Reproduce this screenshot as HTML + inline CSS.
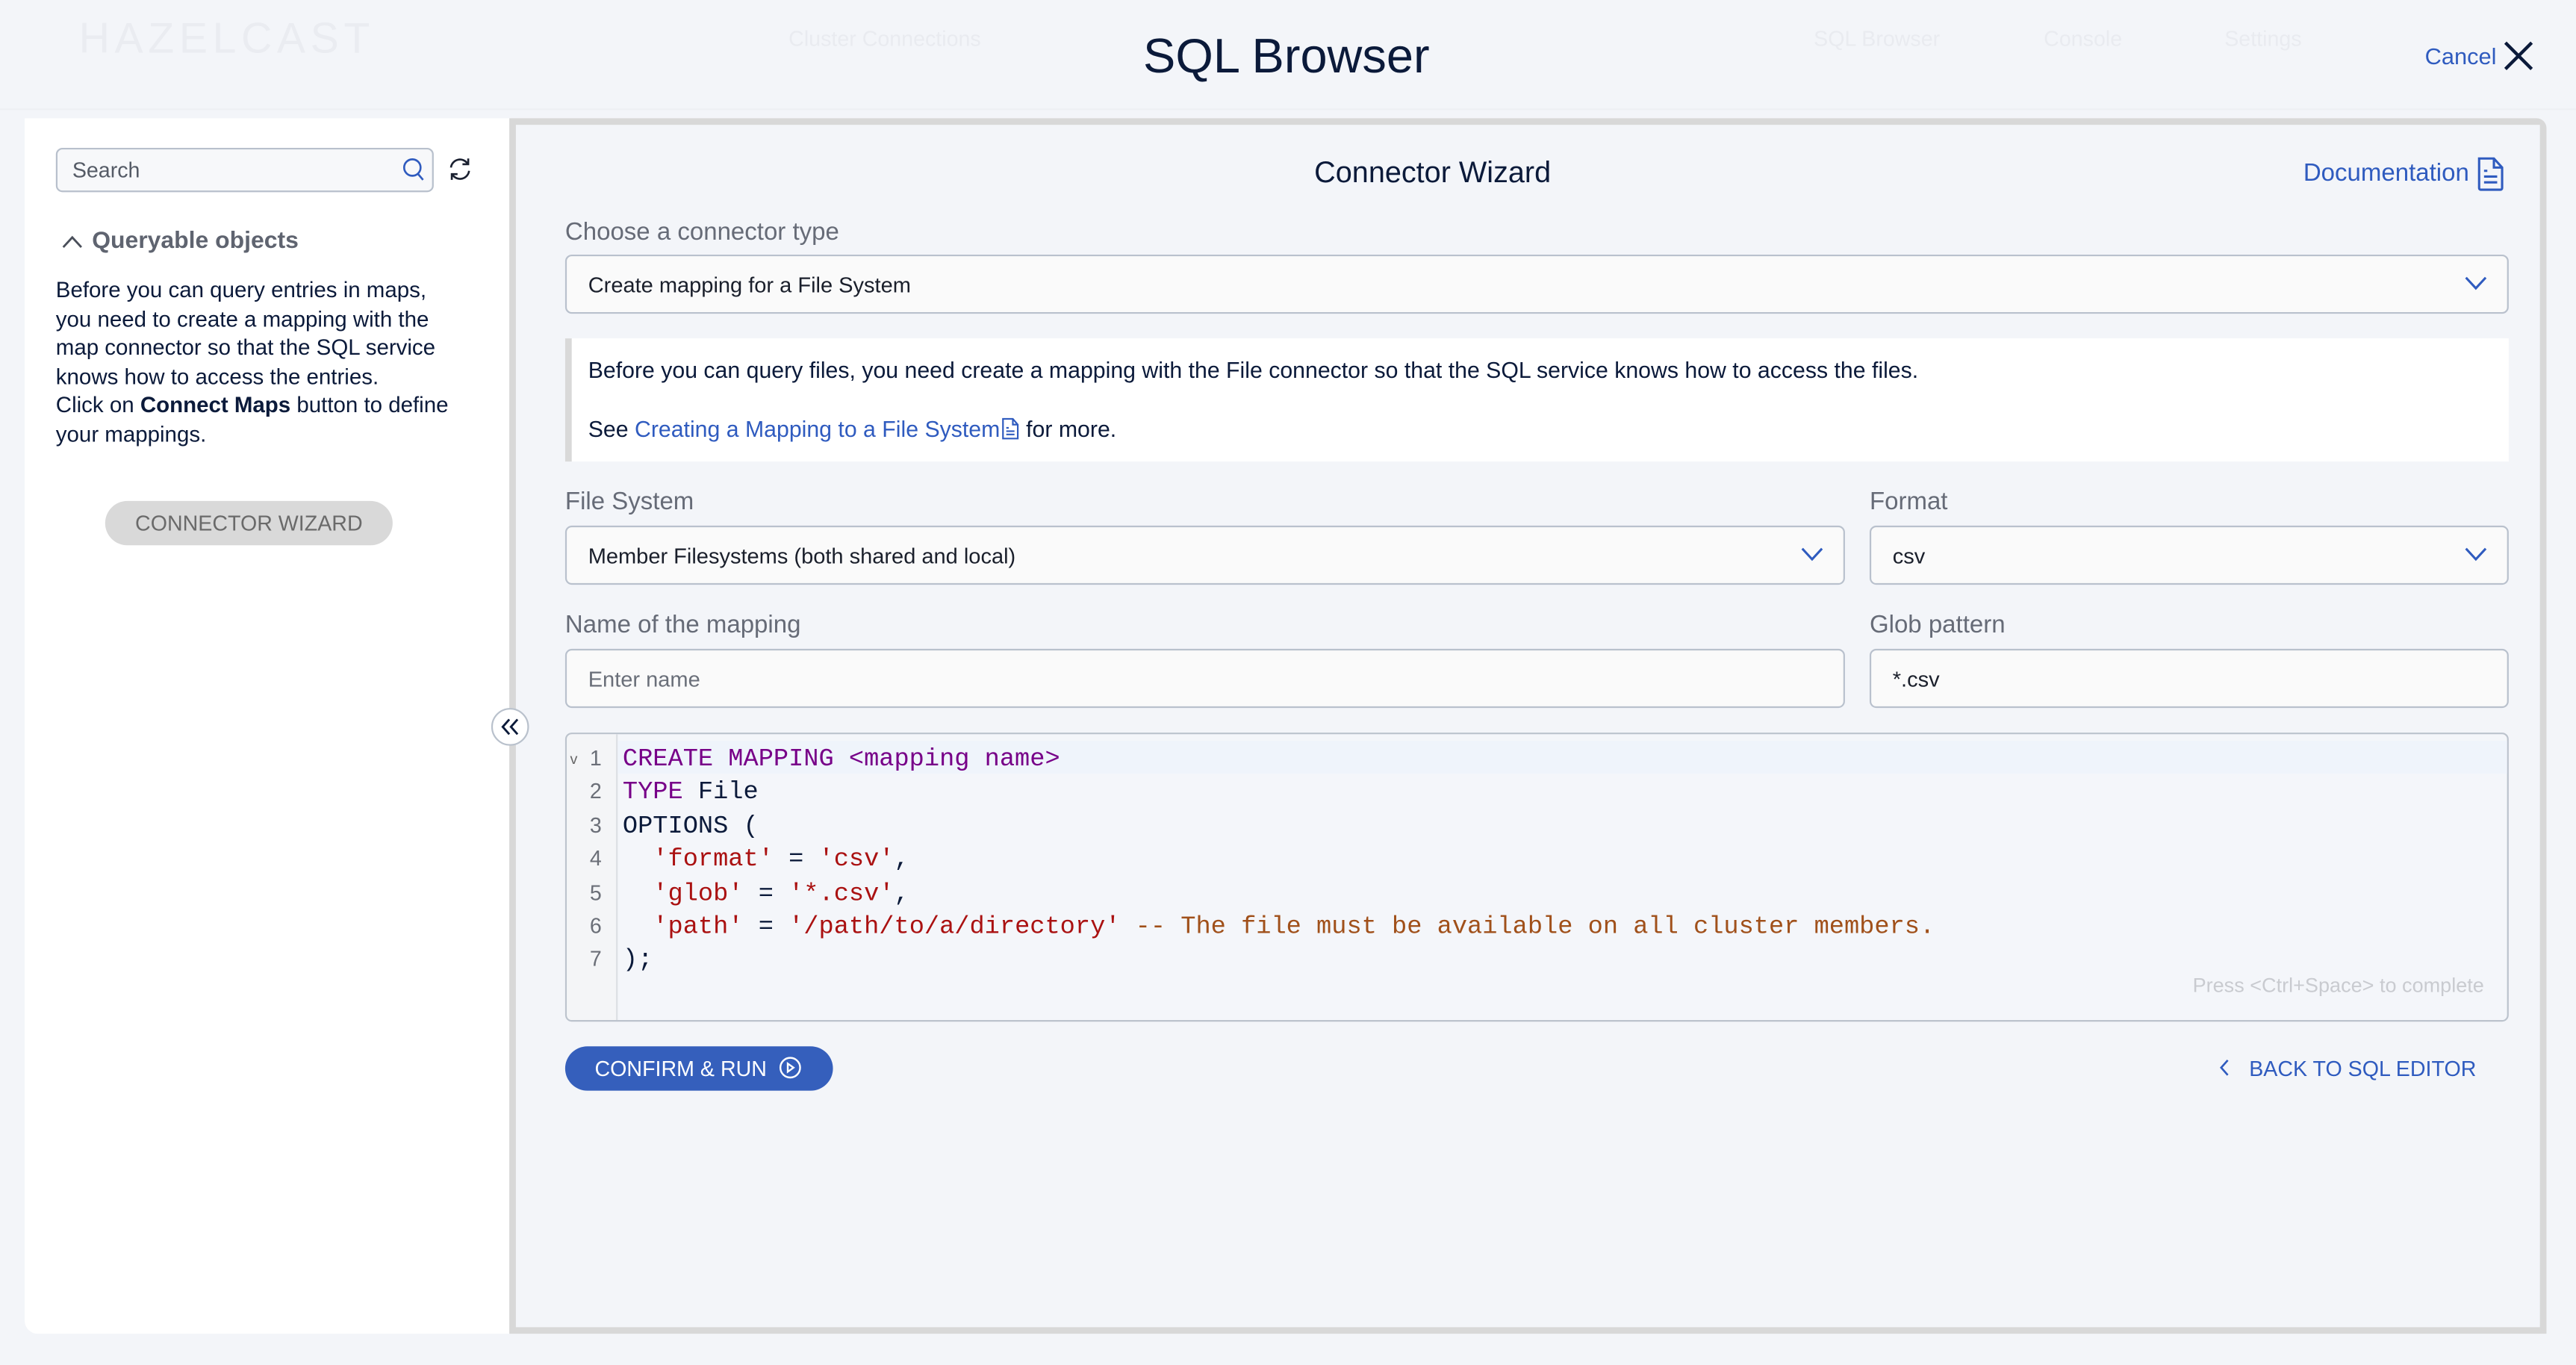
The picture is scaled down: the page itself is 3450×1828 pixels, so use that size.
<!DOCTYPE html>
<html><head><meta charset="utf-8"><style>
*{box-sizing:border-box;margin:0;padding:0}
html,body{width:3450px;height:1828px;overflow:hidden;background:#f3f5f9}
#s{position:absolute;left:0;top:0;width:1568px;height:831px;transform:scale(2.2003,2.1997);transform-origin:0 0;font-family:"Liberation Sans",Arial,sans-serif;color:#0b1a3a;background:#f3f5f9}
.a{position:absolute}
.faint{color:#e6e9ef}
.lbl{position:absolute;font-size:15px;color:#666b77}
.box{position:absolute;background:#fafafa;border:1px solid #b9c1cd;border-radius:4px;font-size:13.2px;color:#1a1f2b;padding-left:13px;display:flex;align-items:center}
.chev{position:absolute;right:12px;top:50%;margin-top:-5px}
.code{font-family:"Liberation Mono",monospace;font-size:15.3px;line-height:20.4px;white-space:pre}
.kw{color:#770088}.st{color:#a11}.cm{color:#a0501a}
</style></head><body><div id="s">
<div class="a faint" style="left:48px;top:8px;font-size:26px;letter-spacing:3px;color:#eaecf1">HAZELCAST</div>
<div class="a" style="left:0;top:66px;width:1568px;height:1px;background:#eef0f4"></div>
<div class="a faint" style="left:480px;top:16px;font-size:13px;color:#e9ebf0">Cluster Connections</div>
<div class="a faint" style="left:1104px;top:16px;font-size:13px;color:#e9ebf0">SQL Browser</div>
<div class="a faint" style="left:1244px;top:16px;font-size:13px;color:#e9ebf0">Console</div>
<div class="a faint" style="left:1354px;top:16px;font-size:13px;color:#e9ebf0">Settings</div>

<div class="a" style="left:0;width:1568px;top:18px;text-align:center;font-size:29.5px;color:#0b1a3a;padding-right:2px">SQL Browser</div>
<div class="a" style="left:1476px;top:26px;font-size:14px;color:#2f5bbf">Cancel</div>
<svg class="a" style="left:1523px;top:24px" width="20" height="20" viewBox="0 0 20 20"><path d="M2 2L18 18M18 2L2 18" stroke="#0b1a3a" stroke-width="2"/></svg>

<div class="a" style="left:15px;top:72px;width:296px;height:740px;background:#fff;border-radius:0 0 0 8px"></div>
<div class="a" style="left:34px;top:90px;width:230px;height:27px;border:1px solid #b8c0cc;border-radius:4px;background:#f7f8fa;font-size:13px;color:#555b66;padding:5px 0 0 9px">Search</div>
<svg class="a" style="left:245px;top:96px" width="14" height="15" viewBox="0 0 14 15"><circle cx="6" cy="6" r="5" fill="none" stroke="#2f5bbf" stroke-width="1.2"/><path d="M9.5 10L12.5 13.5" stroke="#2f5bbf" stroke-width="1.2"/></svg>
<svg class="a" style="left:272px;top:95px" width="16" height="16" viewBox="0 0 16 16" fill="none" stroke="#1a2030" stroke-width="1.2"><path d="M2.5 7A5.5 5.5 0 0 1 12.5 4.5M13.5 9A5.5 5.5 0 0 1 3.5 11.5"/><path d="M13 1.5V5H9.5M3 14.5V11H6.5"/></svg>
<svg class="a" style="left:37px;top:142px" width="14" height="10" viewBox="0 0 14 10"><path d="M1.5 8.5L7 2.5L12.5 8.5" fill="none" stroke="#4a4f5a" stroke-width="1.3"/></svg>
<div class="a" style="left:56px;top:139px;font-size:14.5px;font-weight:bold;color:#5f6470">Queryable objects</div>
<div class="a" style="left:34px;top:168px;width:248px;font-size:13.4px;line-height:17.6px;color:#0b1a3a">Before you can query entries in maps, you need to create a mapping with the map connector so that the SQL service knows how to access the entries.<br>Click on <b>Connect Maps</b> button to define your mappings.</div>
<div class="a" style="left:64px;top:305px;width:175px;height:27px;border-radius:14px;background:#d9d9d9;color:#6a6a6a;font-size:13px;text-align:center;line-height:27px">CONNECTOR WIZARD</div>

<div class="a" style="left:310px;top:72px;width:1240px;height:740px;background:#d8d8d8;border-radius:0 6px 0 0"></div>
<div class="a" style="left:314px;top:76px;width:1232px;height:732px;background:#f3f5f9"></div>
<div class="a" style="left:299px;top:431px;width:23px;height:23px;border-radius:50%;background:#fff;border:1px solid #b9c1cc"></div>
<svg class="a" style="left:303px;top:435px" width="15" height="15" viewBox="0 0 15 15" fill="none" stroke="#0b1a3a" stroke-width="1.3"><path d="M7 3L3 7.5L7 12M12 3L8 7.5L12 12"/></svg>

<div class="a" style="left:314px;width:1116px;top:95px;text-align:center;font-size:18px;color:#0b1a3a">Connector Wizard</div>
<div class="a" style="left:1402px;top:97px;font-size:15px;color:#2f5bbf">Documentation</div>
<svg class="a" style="left:1507px;top:95px" width="18" height="22" viewBox="0 0 18 22" fill="none" stroke="#2f5bbf" stroke-width="1.4"><path d="M2 1.5H11L16 7V19.5A1 1 0 0 1 15 20.5H3A1 1 0 0 1 2 19.5Z"/><path d="M11 1.5V7H16M5 9H7M5 12.5H13M5 16H13"/></svg>

<div class="lbl" style="left:344px;top:133px">Choose a connector type</div>
<div class="box" style="left:344px;top:155px;width:1183px;height:36px">Create mapping for a File System<svg class="chev" width="14" height="9" viewBox="0 0 14 9"><path d="M1 1L7 7.5L13 1" fill="none" stroke="#2f5bbf" stroke-width="1.4"/></svg></div>

<div class="a" style="left:344px;top:206px;width:1183px;height:75px;background:#fff;border-left:4px solid #d9d9d9"></div>
<div class="a" style="left:358px;top:218px;font-size:13.75px;color:#0b1a3a">Before you can query files, you need create a mapping with the File connector so that the SQL service knows how to access the files.</div>
<div class="a" style="left:358px;top:254px;font-size:13.75px;color:#0b1a3a">See <span style="color:#2f5bbf">Creating a Mapping to a File System</span><svg width="12" height="14" viewBox="0 0 12 14" fill="none" stroke="#2f5bbf" stroke-width="1" style="vertical-align:-2px"><path d="M1.5 1H7.5L10.5 4.5V13H1.5Z"/><path d="M7.5 1V4.5H10.5M3.5 6.5H5M3.5 8.5H8.5M3.5 10.5H8.5"/></svg> for more.</div>

<div class="lbl" style="left:344px;top:297px">File System</div>
<div class="box" style="left:344px;top:320px;width:779px;height:36px">Member Filesystems (both shared and local)<svg class="chev" width="14" height="9" viewBox="0 0 14 9"><path d="M1 1L7 7.5L13 1" fill="none" stroke="#2f5bbf" stroke-width="1.4"/></svg></div>
<div class="lbl" style="left:1138px;top:297px">Format</div>
<div class="box" style="left:1138px;top:320px;width:389px;height:36px">csv<svg class="chev" width="14" height="9" viewBox="0 0 14 9"><path d="M1 1L7 7.5L13 1" fill="none" stroke="#2f5bbf" stroke-width="1.4"/></svg></div>

<div class="lbl" style="left:344px;top:372px">Name of the mapping</div>
<div class="box" style="left:344px;top:395px;width:779px;height:36px;color:#6a6f79">Enter name</div>
<div class="lbl" style="left:1138px;top:372px">Glob pattern</div>
<div class="box" style="left:1138px;top:395px;width:389px;height:36px">*.csv</div>

<div class="a" style="left:344px;top:446px;width:1183px;height:176px;border:1px solid #bcc3cd;border-radius:4px;background:#f4f6fa;overflow:hidden">
 <div class="a" style="left:0;top:0;width:31px;height:176px;background:#f4f5f7;border-right:1px solid #dcdfe4"></div>
 <div class="a" style="left:31px;top:4px;width:1152px;height:20px;background:#eff4fb"></div>
 <div class="a" style="left:2px;top:10px;font-size:9px;color:#666">v</div>
 <div class="a code" style="left:14px;top:5px;color:#6b6f78;text-align:right;font-family:'Liberation Sans',sans-serif;font-size:13px">1
2
3
4
5
6
7</div>
 <div class="a code" style="left:34px;top:5px;color:#0b1a3a"><span class="kw">CREATE MAPPING &lt;mapping name&gt;</span>
<span class="kw">TYPE</span> File
OPTIONS (
  <span class="st">'format'</span> = <span class="st">'csv'</span>,
  <span class="st">'glob'</span> = <span class="st">'*.csv'</span>,
  <span class="st">'path'</span> = <span class="st">'/path/to/a/directory'</span> <span class="cm">-- The file must be available on all cluster members.</span>
);</div>
 <div class="a" style="right:14px;top:146px;font-size:12.3px;color:#c9cbd0">Press &lt;Ctrl+Space&gt; to complete</div>
</div>

<div class="a" style="left:344px;top:637px;width:163px;height:27px;border-radius:14px;background:#355fbc;color:#fff;font-size:13px;line-height:27px;padding-left:18px">CONFIRM &amp; RUN</div>
<svg class="a" style="left:474px;top:643px" width="14" height="14" viewBox="0 0 14 14" fill="none" stroke="#fff" stroke-width="1.1"><circle cx="7" cy="7" r="6"/><path d="M5.5 4.5L9 7L5.5 9.5Z"/></svg>
<svg class="a" style="left:1350px;top:644px" width="8" height="12" viewBox="0 0 8 12"><path d="M6 1.5L2 6L6 10.5" fill="none" stroke="#2f5bbf" stroke-width="1.2"/></svg>
<div class="a" style="left:1369px;top:643px;font-size:13px;color:#2f5bbf">BACK TO SQL EDITOR</div>
</div></body></html>
